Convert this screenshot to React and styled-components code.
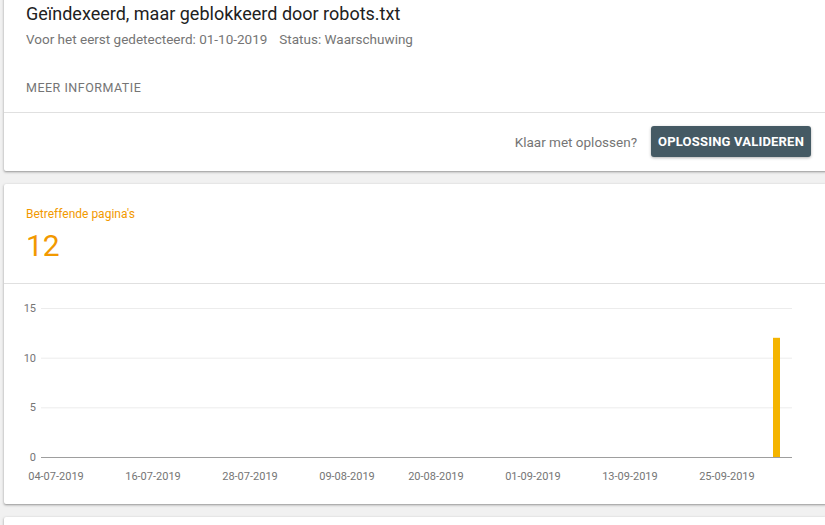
import React from 'react';
import styled, { createGlobalStyle } from 'styled-components';

const colors = {
    page: '#f1f1f1',
    card: '#ffffff',
    divider: '#e0e0e0',
    title: '#212121',
    muted: '#757575',
    orange: '#f29900',
    button: '#455a64',
    bar: '#f4b400',
    grid: '#ececec',
    axis: '#9e9e9e',
};

const GlobalStyle = createGlobalStyle`
    html, body {
        margin: 0;
        padding: 0;
        background: ${colors.page};
        overflow: hidden;
        font-family: Roboto, 'Liberation Sans', Arial, sans-serif;
    }
`;

const Page = styled.div`
    display: flex;
    flex-direction: column;
    gap: 13px;
    margin-top: -14px;
    padding-left: 4px;
    margin-right: -2px;
`;

const Card = styled.section`
    background: ${colors.card};
    border-radius: 2px;
    box-shadow: 0 1px 2px rgba(0, 0, 0, 0.3), 0 1px 3px 1px rgba(0, 0, 0, 0.08);
    min-height: ${(p) => p.$minHeight || 0}px;
`;

const Header = styled.div`
    padding: 16px 22px 16px 22px;
    border-bottom: 1px solid ${colors.divider};
`;

const Title = styled.h1`
    margin: 0;
    font-size: 18px;
    line-height: 24px;
    font-weight: 400;
    color: ${colors.title};
`;

const Meta = styled.div`
    display: flex;
    gap: 12px;
    margin-top: 3px;
    font-size: 13.5px;
    line-height: 20px;
    color: ${colors.muted};
`;

const MoreLink = styled.div`
    margin-top: 31px;
    font-size: 12.5px;
    line-height: 16px;
    letter-spacing: 0.5px;
    text-transform: uppercase;
    color: ${colors.muted};
`;

const Footer = styled.div`
    display: flex;
    justify-content: flex-end;
    align-items: center;
    gap: 14px;
    padding: 13px 16px 14px;
`;

const FooterText = styled.span`
    font-size: 13.5px;
    color: ${colors.muted};
`;

const PrimaryButton = styled.button`
    height: 31px;
    padding: 0 7px;
    border: none;
    border-radius: 3px;
    background: ${colors.button};
    color: #fff;
    font-family: inherit;
    font-size: 13px;
    font-weight: 700;
    letter-spacing: 0.2px;
    text-transform: uppercase;
    box-shadow: 0 1px 3px rgba(0, 0, 0, 0.3);
    cursor: pointer;
`;

const Summary = styled.div`
    padding: 23px 22px 19px;
    border-bottom: 1px solid ${colors.divider};
`;

const SummaryLabel = styled.div`
    font-size: 12px;
    line-height: 14px;
    color: ${colors.orange};
`;

const SummaryValue = styled.div`
    margin-top: 7px;
    font-size: 30px;
    line-height: 36px;
    color: ${colors.orange};
`;

const ChartBox = styled.div`
    height: 220px;
`;

// grafiek: 15 = y 24, 0 = y 173 (lokaal)
const plot = { left: 37, right: 788, top: 24, bottom: 173, max: 15 };
const dayWidth = 97 / 12;
const firstLabelX = 52;

const xLabels = [
    { label: '04-07-2019', day: 0 },
    { label: '16-07-2019', day: 12 },
    { label: '28-07-2019', day: 24 },
    { label: '09-08-2019', day: 36 },
    { label: '20-08-2019', day: 47 },
    { label: '01-09-2019', day: 59 },
    { label: '13-09-2019', day: 71 },
    { label: '25-09-2019', day: 83 },
];

const bars = [{ day: 89, value: 12 }];

const yFor = (v) => plot.bottom - (v / plot.max) * (plot.bottom - plot.top);

const Chart = () => (
    <svg width="821" height="220" style={{ display: 'block' }}>
        {[15, 10, 5].map((v) => (
            <line key={v} x1={plot.left} x2={plot.right} y1={yFor(v) + 0.5} y2={yFor(v) + 0.5} stroke={colors.grid} />
        ))}
        {[15, 10, 5, 0].map((v) => (
            <text key={v} x={plot.left - 5} y={yFor(v) + 4} textAnchor="end" fontSize="11" fill={colors.muted} fontFamily="Roboto, sans-serif">
                {v}
            </text>
        ))}
        {bars.map((b) => {
            const cx = firstLabelX + b.day * dayWidth;
            const top = yFor(b.value);
            return <rect key={b.day} x={Math.round(cx - 2.5)} y={top} width="7" height={plot.bottom - top} fill={colors.bar} />;
        })}
        <line x1={plot.left} x2={plot.right} y1={plot.bottom + 0.5} y2={plot.bottom + 0.5} stroke={colors.axis} />
        {xLabels.map((l) => (
            <text key={l.label} x={firstLabelX + l.day * dayWidth} y={196} textAnchor="middle" fontSize="11" fill={colors.muted} fontFamily="Roboto, sans-serif">
                {l.label}
            </text>
        ))}
    </svg>
);

export default function App() {
    return (
        <>
            <GlobalStyle />
            <Page>
                <Card>
                    <Header>
                        <Title>Geïndexeerd, maar geblokkeerd door robots.txt</Title>
                        <Meta>
                            <span>Voor het eerst gedetecteerd: 01-10-2019</span>
                            <span>Status: Waarschuwing</span>
                        </Meta>
                        <MoreLink>Meer informatie</MoreLink>
                    </Header>
                    <Footer>
                        <FooterText>Klaar met oplossen?</FooterText>
                        <PrimaryButton>Oplossing valideren</PrimaryButton>
                    </Footer>
                </Card>
                <Card>
                    <Summary>
                        <SummaryLabel>Betreffende pagina's</SummaryLabel>
                        <SummaryValue>12</SummaryValue>
                    </Summary>
                    <ChartBox>
                        <Chart />
                    </ChartBox>
                </Card>
                <Card $minHeight={40} />
            </Page>
        </>
    );
}
